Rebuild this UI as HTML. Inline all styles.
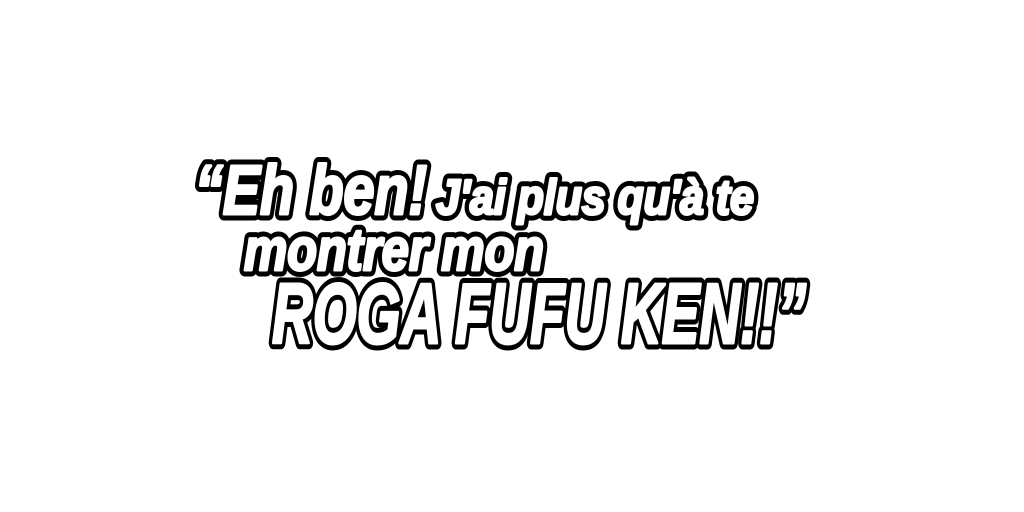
<!DOCTYPE html>
<html><head><style>html,body{margin:0;padding:0;background:#fff;width:1024px;height:512px;overflow:hidden}</style></head>
<body>
<svg width="1024" height="512" xmlns="http://www.w3.org/2000/svg">
<defs>
<g id="t" font-family="Liberation Sans, sans-serif" font-weight="bold" font-style="italic">
<text x="195" y="214" font-size="70" textLength="232" lengthAdjust="spacingAndGlyphs">“Eh ben!</text>
<text x="436" y="214" font-size="49" textLength="318" lengthAdjust="spacingAndGlyphs">J'ai plus qu'à te</text>
<text x="244" y="270" font-size="59" textLength="300" lengthAdjust="spacingAndGlyphs">montrer mon</text>
<text x="272" y="343" font-size="85" textLength="534" lengthAdjust="spacingAndGlyphs">ROGA FUFU KEN!!”</text>
</g>
</defs>
<use href="#t" fill="#000" stroke="#000" stroke-width="13" stroke-linejoin="round"/>
<use href="#t" fill="#fff" stroke="#fff" stroke-width="3" stroke-linejoin="round"/>
</svg>
</body></html>
